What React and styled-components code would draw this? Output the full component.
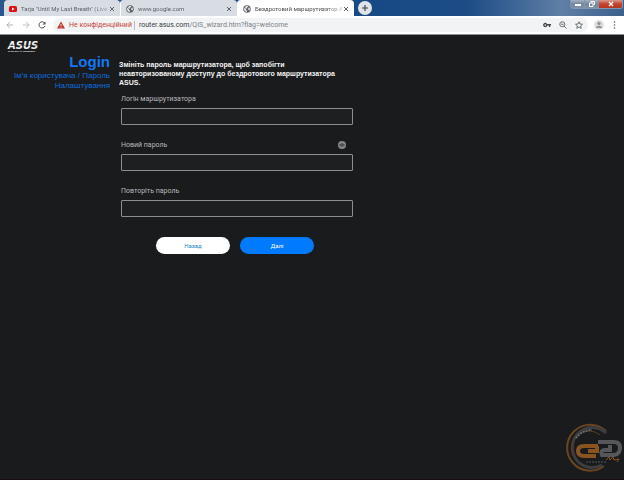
import { useState } from 'react'
import styled, { createGlobalStyle } from 'styled-components'

const GlobalStyle = createGlobalStyle`
    * {
        box-sizing: border-box;
    }
    html, body, #root {
        height: 100%;
    }
    body {
        margin: 0;
        background: #1a1b1d;
        font-family: Roboto, "Liberation Sans", sans-serif;
    }
    button, input {
        font-family: inherit;
    }
`

const Window = styled.div`
    display: flex;
    flex-direction: column;
    min-height: 100%;
    border-bottom: 1px solid #170d12;
`

const TabStrip = styled.div`
    display: flex;
    height: 16px;
    padding-left: 4px;
    background: linear-gradient(90deg, #2a568e 0%, #174a85 60%, #1d4c86 75%, #5f7fa6 90%, #3c5f8b 100%);
`

const Tabs = styled.div`
    display: flex;
    flex: 0 1 350px;
    min-width: 0;
`

const Tab = styled.div`
    display: flex;
    flex: 1 1 0;
    align-items: center;
    min-width: 0;
    padding: 1px 4px 0 5px;
    border-radius: 4px 4px 0 0;
    background: ${props => (props.$active ? '#ffffff' : '#d8dde4')};
    color: ${props => (props.$active ? '#4a4d51' : '#5c6066')};

    & + & {
        border-left: 1px solid ${props => (props.$active ? '#ffffff' : '#a3a9b2')};
    }

    & > svg {
        flex: none;
        margin-right: 4px;
    }
`

const TabTitle = styled.span`
    flex: 1;
    overflow: hidden;
    white-space: nowrap;
    font: 6px/12px Roboto, sans-serif;
    mask-image: linear-gradient(90deg, #000 80%, rgba(0, 0, 0, 0.3) 100%);
`

const IconButton = styled.button`
    display: flex;
    flex: none;
    align-items: center;
    justify-content: center;
    width: ${props => props.$size || 10}px;
    height: ${props => props.$size || 10}px;
    padding: 0;
    border: none;
    border-radius: 50%;
    background: ${props => props.$bg || 'transparent'};
    color: ${props => props.$color || '#5f6368'};
    cursor: pointer;
`

const NewTab = styled(IconButton)`
    margin: 1px 0 0 4px;
`

const WindowControls = styled.div`
    display: flex;
    height: 9px;
    margin: 0 1px 0 auto;
    border: 1px solid #8195b0;
    border-top: none;
    border-radius: 0 0 3px 3px;
    overflow: hidden;
`

const WindowButton = styled.button`
    display: flex;
    align-items: center;
    justify-content: center;
    width: ${props => (props.$close ? 23 : 14)}px;
    padding: 0;
    border: none;
    border-right: ${props => (props.$close ? 'none' : '1px solid #8195b0')};
    background: ${props => (props.$close
        ? 'linear-gradient(#d99a8c 0%, #c5422c 50%, #b8351f 100%)'
        : 'linear-gradient(#a5b2c2 0%, #72869f 50%, #7f92aa 100%)')};
`

const Toolbar = styled.div`
    display: flex;
    align-items: center;
    height: 19px;
    padding: 0 6px 0 5px;
    gap: 6px;
    background: #ffffff;
    border-bottom: 1px solid #8b9090;
`

const AddressBar = styled.div`
    display: flex;
    flex: 1;
    align-items: center;
    gap: 4px;
    min-width: 0;
    height: 14px;
    padding: 0 4px;
    border-radius: 7px;
    background: #f1f3f4;
    font: 7px/12px Roboto, sans-serif;
`

const Insecure = styled.span`
    padding-right: 2px;
    border-right: 1px solid #b9bcc0;
    color: #c5443a;
    line-height: 9px;
    white-space: nowrap;
`

const Address = styled.span`
    flex: 1;
    overflow: hidden;
    color: #7d8186;
    white-space: nowrap;

    & > b {
        color: #3a3d41;
        font-weight: 400;
    }
`

const BarActions = styled.div`
    display: flex;
    gap: 6px;
`

const Page = styled.div`
    display: flex;
    flex: 1;
    flex-direction: column;
    padding: 5px 0 0;
    background: #1a1b1d;
`

const LogoLink = styled.a`
    display: block;
    align-self: flex-start;
    margin-left: 7px;
    height: 13px;

    & > svg {
        display: block;
    }
`

const Wizard = styled.main`
    display: grid;
    grid-template-columns: 110px minmax(0, 234px);
    column-gap: 9px;
    flex: 1;
    align-content: start;
`

const Steps = styled.aside`
    color: #0f6bdc;
    font: 8px/10px "Liberation Sans", Arial, sans-serif;
    text-align: right;
`

const Heading = styled.h1`
    margin: 0;
    color: #1478f0;
    font-size: 15px;
    line-height: 18px;
`

const Step = styled.p`
    margin: 0;
    white-space: nowrap;
`

const Form = styled.form`
    padding-top: 7px;
`

const Intro = styled.p`
    margin: 0 0 7px;
    padding-right: 10px;
    color: #f4f4f4;
    font: 700 7px/9px "Liberation Sans", Arial, sans-serif;
`

const Field = styled.div`
    margin: 0 0 15px 2px;
`

const FieldHead = styled.div`
    display: flex;
    align-items: center;
    justify-content: space-between;
    height: 10px;
    margin-bottom: 4px;
    padding-right: 7px;
`

const Label = styled.label`
    color: #b9babc;
    font-size: 7px;
    line-height: 10px;
`

const Input = styled.input`
    display: block;
    width: 100%;
    height: 17px;
    padding: 0 4px;
    border: 1px solid #8d8e90;
    border-radius: 1px;
    outline: none;
    background: #1e1f21;
    color: #f4f4f4;
    font-size: 8px;

    &:focus {
        border-color: #007aff;
    }
`

const Actions = styled.div`
    display: flex;
    justify-content: center;
    gap: 10px;
    padding: 5px 2px 0 0;
`

const PillButton = styled.button`
    width: 74px;
    height: 17px;
    padding: 0;
    border: none;
    border-radius: 9px;
    background: ${props => (props.$primary ? '#007aff' : '#ffffff')};
    color: ${props => (props.$primary ? '#ffffff' : '#2a86c8')};
    font-size: 6px;
    line-height: 17px;
    cursor: pointer;
`

const Watermark = styled.svg`
    position: fixed;
    right: 0;
    bottom: 4px;
    pointer-events: none;
`

const Globe = () => (
    <svg width="8" height="8" viewBox="0 0 16 16">
        <circle cx="8" cy="8" r="7.5" fill="#5f6368" />
        <path d="M2 5l4 3v2l2 1v3C4 14 1 10 2 5zM6 2h4v2L8 5v2H6L4 5zM12 4l2 4-1 3-2-1-1-2z" fill="#dfe2e6" />
    </svg>
)

const YouTube = () => (
    <svg width="8" height="8" viewBox="0 0 16 16">
        <rect y="2" width="16" height="12" rx="3" fill="#e1100d" />
        <path d="M6 5l5 3-5 3z" fill="#fff" />
    </svg>
)

const Cross = () => (
    <svg width="6" height="6" viewBox="0 0 12 12" stroke="currentColor" strokeWidth="2">
        <path d="M2 2l8 8M10 2l-8 8" />
    </svg>
)

const Arrow = ({ flip }) => (
    <svg width="8" height="8" viewBox="0 0 18 18" fill="none" stroke="currentColor" strokeWidth="2">
        <path d={flip ? 'M2 9h14M9 2l7 7-7 7' : 'M16 9H2M9 2L2 9l7 7'} />
    </svg>
)

const AsusLogo = () => (
    <svg width="32" height="13" viewBox="0 0 32 13" fill="#f2f2f2">
        <text x="1" y="9" fontFamily="DejaVu Sans" fontSize="10" fontWeight="700" fontStyle="oblique">ASUS</text>
        <path d="M0 5.4h30" stroke="#1a1b1d" strokeWidth="0.4" />
        <text x="1" y="12" fontFamily="Liberation Sans" fontSize="2" fontWeight="700">IN SEARCH OF INCREDIBLE</text>
    </svg>
)

const tabs = [
    { title: 'Tarja "Until My Last Breath" (Live', icon: <YouTube /> },
    { title: 'www.google.com', icon: <Globe /> },
    { title: 'Бездротовий маршрутизатор AS', icon: <Globe />, active: true },
]

const Browser = () => (
    <>
        <TabStrip>
            <Tabs>
                {tabs.map(tab => (
                    <Tab key={tab.title} $active={tab.active}>
                        {tab.icon}
                        <TabTitle>{tab.title}</TabTitle>
                        <IconButton $size={8} aria-label="Close tab"><Cross /></IconButton>
                    </Tab>
                ))}
            </Tabs>
            <NewTab $size={14} $bg="#dfe3e8" aria-label="New tab">
                <svg width="8" height="8" viewBox="0 0 8 8" stroke="#3f4347" strokeWidth="1.2">
                    <path d="M4 1v6M1 4h6" />
                </svg>
            </NewTab>
            <WindowControls>
                <WindowButton aria-label="Minimize">
                    <svg width="6" height="6" viewBox="0 0 6 6"><rect y="3" width="6" height="2" fill="#fff" /></svg>
                </WindowButton>
                <WindowButton aria-label="Restore">
                    <svg width="6" height="6" viewBox="0 0 6 6" fill="none" stroke="#fff">
                        <path d="M2 1.5V.5h3.5v3h-1M.5 2h3.5v3.5H.5z" />
                    </svg>
                </WindowButton>
                <WindowButton $close aria-label="Close">
                    <svg width="6" height="6" viewBox="0 0 6 6" stroke="#fff" strokeWidth="1.4"><path d="M1 1l4 4M5 1L1 5" /></svg>
                </WindowButton>
            </WindowControls>
        </TabStrip>
        <Toolbar>
            <IconButton $color="#a9acb0" aria-label="Back"><Arrow /></IconButton>
            <IconButton $color="#b6b9bc" aria-label="Forward"><Arrow flip /></IconButton>
            <IconButton $color="#4c5054" aria-label="Reload">
                <svg width="8" height="8" viewBox="0 0 16 16" fill="none" stroke="currentColor" strokeWidth="2">
                    <path d="M13.5 4.5A6.2 6.2 0 1 0 14 10" />
                    <path d="M15 1v6H9z" fill="currentColor" stroke="none" />
                </svg>
            </IconButton>
            <AddressBar>
                <svg width="8" height="8" viewBox="0 0 16 16">
                    <path d="M8 1l8 14H0z" fill="#c5352b" />
                    <path d="M8 6v4M8 11.5v2" stroke="#fff" strokeWidth="1.6" />
                </svg>
                <Insecure>Не конфіденційний</Insecure>
                <Address><b>router.asus.com</b>/QIS_wizard.htm?flag=welcome</Address>
                <BarActions>
                    <IconButton aria-label="Saved passwords">
                        <svg width="8" height="8" viewBox="0 0 16 16" fill="none" stroke="#45484c" strokeWidth="2.6">
                            <circle cx="4.5" cy="8" r="3" />
                            <path d="M7.5 7.5H16M13 8v4" />
                        </svg>
                    </IconButton>
                    <IconButton aria-label="Zoom">
                        <svg width="8" height="8" viewBox="0 0 16 16" fill="none" stroke="currentColor" strokeWidth="1.8">
                            <circle cx="6.5" cy="6.5" r="5" />
                            <path d="M10 10l5 5M4 6.5h5" />
                        </svg>
                    </IconButton>
                    <IconButton aria-label="Bookmark">
                        <svg width="8" height="8" viewBox="0 0 16 16" fill="none" stroke="currentColor" strokeWidth="1.8">
                            <path d="M8 1.5l2 4.5 5 .5-3.8 3.3 1.2 4.9L8 12l-4.4 2.7 1.2-4.9L1 6.5 6 6z" />
                        </svg>
                    </IconButton>
                </BarActions>
            </AddressBar>
            <IconButton $bg="#dfe0e2" aria-label="Profile">
                <svg width="8" height="8" viewBox="0 0 8 8" fill="#909498">
                    <circle cx="4" cy="2.5" r="1.7" />
                    <path d="M1 7c0-3 6-3 6 0z" />
                </svg>
            </IconButton>
            <IconButton $size={8} aria-label="Menu">
                <svg width="3" height="8" viewBox="0 0 3 8" fill="#55595d">
                    <circle cx="1.5" cy="1" r="0.8" />
                    <circle cx="1.5" cy="4" r="0.8" />
                    <circle cx="1.5" cy="7" r="0.8" />
                </svg>
            </IconButton>
        </Toolbar>
    </>
)

const App = () => {
    const [visible, setVisible] = useState(false)
    const type = visible ? 'text' : 'password'

    return (
        <>
            <GlobalStyle />
            <Window>
                <Browser />
                <Page>
                    <LogoLink href="#" aria-label="ASUS"><AsusLogo /></LogoLink>
                    <Wizard>
                        <Steps>
                            <Heading>Login</Heading>
                            <Step>Ім'я користувача / Пароль</Step>
                            <Step>Налаштування</Step>
                        </Steps>
                        <Form onSubmit={e => e.preventDefault()}>
                            <Intro>
                                Змініть пароль маршрутизатора, щоб запобігти неавторизованому доступу до бездротового маршрутизатора ASUS.
                            </Intro>
                            <Field>
                                <FieldHead><Label htmlFor="login">Логін маршрутизатора</Label></FieldHead>
                                <Input id="login" type="text" />
                            </Field>
                            <Field>
                                <FieldHead>
                                    <Label htmlFor="password">Новий пароль</Label>
                                    <IconButton type="button" $size={8} $bg="#85878a" aria-label="Show password" onClick={() => setVisible(!visible)}>
                                        <svg width="6" height="4" viewBox="0 0 12 8" fill="none" stroke="#303134" strokeWidth="1.4">
                                            <path d="M1 4q5-6 10 0q-5 6-10 0z" />
                                            <circle cx="6" cy="4" r="1.2" />
                                        </svg>
                                    </IconButton>
                                </FieldHead>
                                <Input id="password" type={type} />
                            </Field>
                            <Field>
                                <FieldHead><Label htmlFor="repeat">Повторіть пароль</Label></FieldHead>
                                <Input id="repeat" type={type} />
                            </Field>
                            <Actions>
                                <PillButton type="button">Назад</PillButton>
                                <PillButton $primary type="submit">Далі</PillButton>
                            </Actions>
                        </Form>
                    </Wizard>
                </Page>
            </Window>
            <Watermark width="64" height="56" viewBox="0 0 64 56" fill="none" aria-hidden="true">
                <path d="M46 11A23 23 0 1 0 44 46" stroke="#6b4520" strokeWidth="2" />
                <path d="M46 13A20 20 0 1 0 42 45" stroke="#3d3e40" strokeWidth="3" />
                <path d="M40 15A17 17 0 0 0 14 36" stroke="#5a3d22" strokeWidth="1" />
                <path d="M16 18A20 20 0 0 1 32 10" stroke="#66686a" strokeWidth="2" strokeDasharray="2 1" />
                <path d="M38 26H24q-6 0-6 5t6 5h12M28 31h9v-5" stroke="#8a5420" strokeWidth="4" />
                <path d="M38 22h16q6 0 6 6t-6 7H42q-2-5 3-5h5v-5" stroke="#55575a" strokeWidth="4" />
                <path d="M46 40l3-3 1 3 3-3 1 3 5-1-2 3" stroke="#8a5420" strokeWidth="1" />
                <path d="M26 42h20" stroke="#55575a" strokeWidth="1" strokeDasharray="2 1" />
            </Watermark>
        </>
    )
}

export default App
